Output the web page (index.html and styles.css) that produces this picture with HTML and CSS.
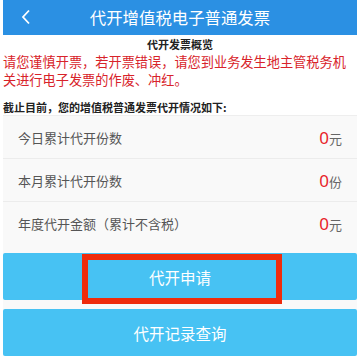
FILE: index.html
```html
<!DOCTYPE html>
<html lang="zh">
<head>
<meta charset="utf-8">
<link rel="stylesheet" href="styles.css">
</head>
<body>
<div class="page">
  <header class="topbar">
    <svg class="back" width="12" height="16" viewBox="0 0 12 16"><path d="M9 1.5 L3 8 L9 14.5" fill="none" stroke="#fff" stroke-width="1.8"/></svg>
    <h1 class="title">代开增值税电子普通发票</h1>
  </header>
  <div class="overview">代开发票概览</div>
  <p class="notice">请您谨慎开票，若开票错误，请您到业务发生地主管税务机关进行电子发票的作废、冲红。</p>
  <p class="summary">截止目前，您的增值税普通发票代开情况如下:</p>
  <ul class="stats">
    <li class="stat"><span class="label">今日累计代开份数</span><span class="value"><b>0</b>元</span></li>
    <li class="stat"><span class="label">本月累计代开份数</span><span class="value"><b>0</b>份</span></li>
    <li class="stat"><span class="label">年度代开金额（累计不含税）</span><span class="value"><b>0</b>元</span></li>
  </ul>
  <div class="actions">
    <button class="btn btn-apply">代开申请<span class="highlight"></span></button>
    <button class="btn">代开记录查询</button>
  </div>
</div>
</body>
</html>
```
FILE: styles.css
```css
html, body {
  margin: 0;
  padding: 0;
  background: #fff;
}
body {
  font-family: "Noto Sans CJK SC", "Noto Sans", sans-serif;
  width: 360px;
  height: 360px;
  overflow: hidden;
}
.page {
  padding: 0 3px;
}
.topbar {
  height: 35px;
  background: #2b90e3;
  display: flex;
  align-items: center;
  justify-content: center;
  position: relative;
}
.back {
  position: absolute;
  left: 17px;
  top: 9px;
}
.title {
  margin: 0;
  font-size: 16.4px;
  font-weight: 400;
  color: #fff;
  line-height: 35px;
  letter-spacing: 0;
}
.overview {
  text-align: center;
  font-size: 11px;
  font-weight: 700;
  color: #222;
  line-height: 16px;
  margin-top: 1px;
}
.notice {
  margin: 1px 0 0;
  color: #d8232a;
  font-size: 13.2px;
  line-height: 18px;
}
.summary {
  margin: 10px 0 0;
  font-size: 11px;
  font-weight: 700;
  color: #222;
  line-height: 16px;
}
.stats {
  list-style: none;
  margin: 0;
  padding: 0;
  background: #f9f9f9;
  border-top: 1px solid #eee;
  padding-bottom: 9px;
}
.stat {
  height: 42px;
  border-bottom: 1px solid #ececec;
  display: flex;
  align-items: center;
  justify-content: space-between;
  padding: 0 15px;
  font-size: 13px;
  color: #555;
}
.stat:last-child {
  border-bottom: none;
}
.value {
  font-size: 13px;
  color: #666;
}
.value b {
  font-family: "Noto Sans", sans-serif;
  font-weight: 400;
  font-size: 17px;
  color: #e8232a;
}
.actions {
  display: flex;
  flex-direction: column;
  gap: 9px;
  background: #f9f9f9;
}
.btn {
  position: relative;
  height: 47px;
  border: none;
  border-radius: 2px;
  background: #47c2f3;
  color: #fff;
  font-family: "Noto Sans CJK SC", "Noto Sans", sans-serif;
  font-size: 15.5px;
  padding: 0;
}
.highlight {
  position: absolute;
  left: 79px;
  top: 1px;
  width: 200px;
  height: 50px;
  box-sizing: border-box;
  border: 6px solid #ef2b0c;
}
```
